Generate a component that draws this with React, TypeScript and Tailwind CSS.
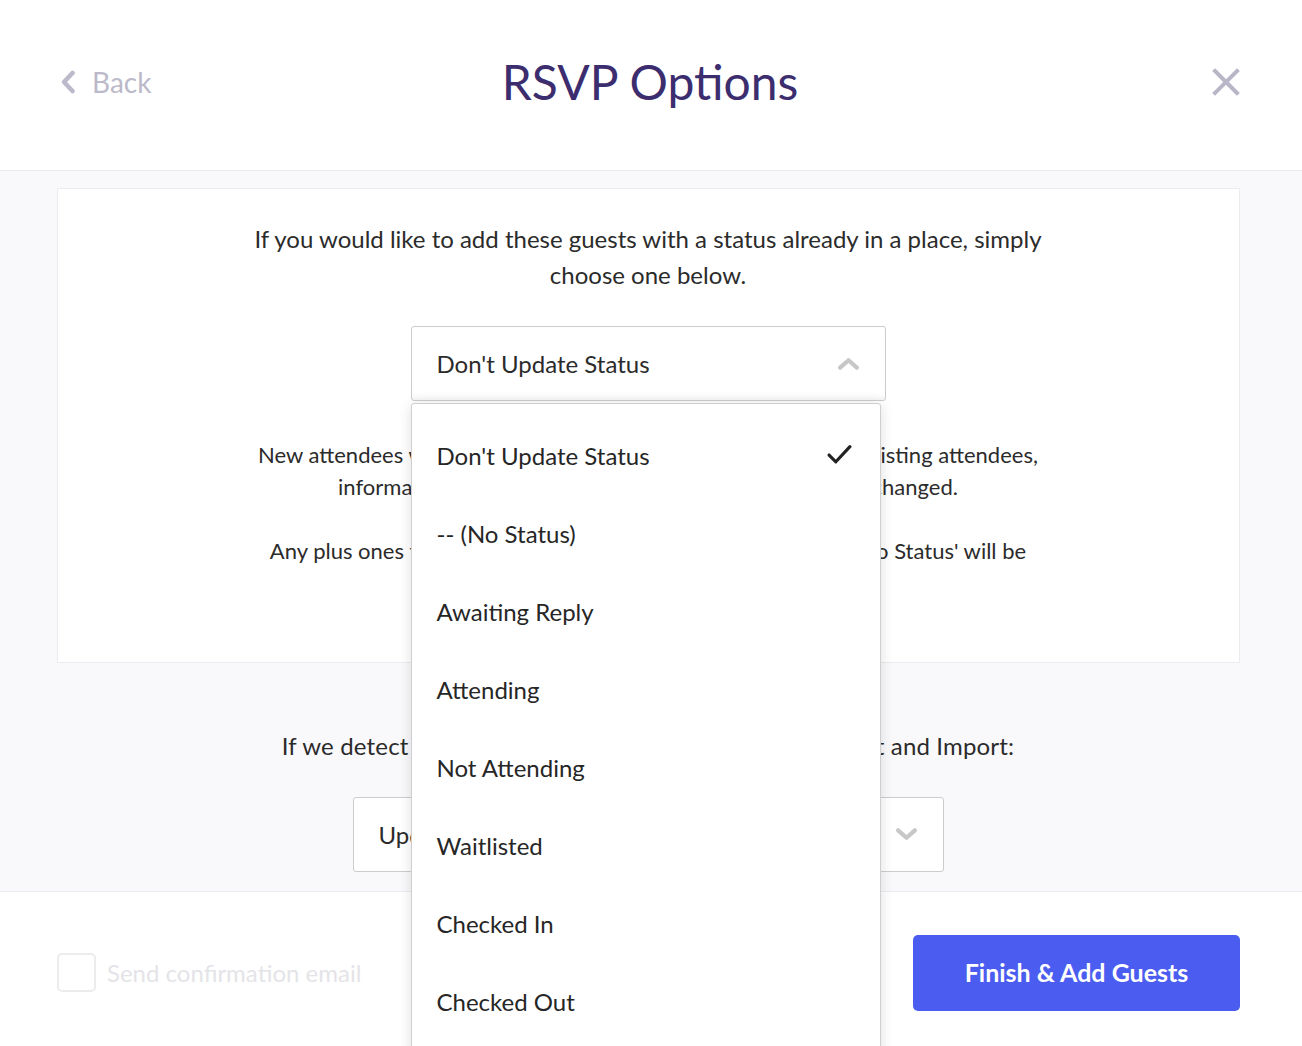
const font = { fontFamily: "Lato, 'Open Sans', sans-serif" };

const statuses = [
  "Don't Update Status",
  "-- (No Status)",
  "Awaiting Reply",
  "Attending",
  "Not Attending",
  "Waitlisted",
  "Checked In",
  "Checked Out",
  "Cancelled",
];

function Chevron({ up, className }: { up?: boolean; className?: string }) {
  return (
    <svg viewBox="0 0 24 14" className={className} fill="none">
      <path
        d={up ? "M3 11.5 12 3.5 21 11.5" : "M3 2.5 12 10.5 21 2.5"}
        stroke="currentColor"
        strokeWidth="4.5"
        strokeLinecap="round"
        strokeLinejoin="round"
      />
    </svg>
  );
}

function StatusMenu() {
  return (
    <div className="absolute left-0 top-[77px] z-20 w-[470px] rounded-t-[3px] border border-[#cfcfcf] bg-white pt-[13px] shadow-[0_2px_14px_rgba(0,0,0,0.13)]">
      {statuses.map((s, i) => (
        <div key={s} className="flex h-[78px] items-center justify-between pl-[25px] pr-[28px] text-[24px] text-[#262626]">
          <span>{s}</span>
          {i === 0 && (
            <svg viewBox="0 0 24 20" className="mb-[4px] h-[21px] w-[25px]" fill="none">
              <path d="M2 10.5 8.5 17 22 2.5" stroke="#222" strokeWidth="3" strokeLinecap="round" strokeLinejoin="round" />
            </svg>
          )}
        </div>
      ))}
    </div>
  );
}

export default function App() {
  return (
    <div className="flex h-[1046px] flex-col overflow-hidden bg-white" style={font}>
      <header className="flex h-[171px] shrink-0 items-center justify-between border-b border-[#ececf0] pb-[6px] pl-[60px] pr-[62px]">
        <button className="flex w-[160px] items-center gap-[16px] text-[28px] text-[#bcbaca]">
          <svg viewBox="0 0 16 24" className="h-[24px] w-[16px]" fill="none">
            <path d="M12.5 3 4 12l8.5 9" stroke="currentColor" strokeWidth="4.5" strokeLinecap="round" strokeLinejoin="round" />
          </svg>
          Back
        </button>
        <h1 className="text-[48px] font-normal leading-none text-[#3c2d6f]">RSVP Options</h1>
        <div className="flex w-[160px] justify-end">
          <svg viewBox="0 0 28 28" className="h-[28px] w-[28px]" fill="none">
            <path d="M3 3l22 22M25 3 3 25" stroke="#b9b7c7" strokeWidth="4" strokeLinecap="square" />
          </svg>
        </div>
      </header>

      <main className="flex flex-1 flex-col items-center bg-[#f9f9fb] pt-[17px]">
        <section className="ml-[-6px] flex w-[1183px] flex-col items-center border border-[#ececf0] bg-white pb-[63px] pt-[32px] text-center text-[#2b2b2b]">
          <p className="whitespace-nowrap text-[24px] leading-[36px]">
            If you would like to add these guests with a status already in a place, simply
            <br />
            choose one below.
          </p>
          <div className="relative mt-[33px]">
            <div className="flex h-[75px] w-[475px] items-center justify-between rounded-[3px] border border-[#cccccc] bg-white pl-[25px] pr-[24px] shadow-[inset_0_-6px_10px_-6px_rgba(0,0,0,0.08)]">
              <span className="text-[24px]">Don't Update Status</span>
              <Chevron up className="h-[13px] w-[25px] text-[#c7c7c7]" />
            </div>
            <StatusMenu />
          </div>
          <p className="mt-[38px] whitespace-nowrap text-[22px] leading-[32px]">
            New attendees will be added with the selected status. For any existing attendees,
            <br />
            information will be updated, but their status will not be changed.
          </p>
          <p className="mt-[32px] whitespace-nowrap text-[22px] leading-[32px]">
            Any plus ones that are imported along with the guests set to 'No Status' will be
            <br />
            imported with the same status.
          </p>
        </section>

        <p className="ml-[-6px] mt-[67px] whitespace-nowrap text-[24px] leading-[32px] tracking-[0.16px] text-[#2b2b2b]">
          If we detect a duplicate guest, choose to Update a Guest and Import:
        </p>
        <div className="ml-[-6px] mt-[35px] flex h-[75px] w-[591px] items-center justify-between rounded-[3px] border border-[#cccccc] bg-white pl-[25px] pr-[24px]">
          <span className="text-[24px] text-[#2b2b2b]">Update Existing Guest</span>
          <Chevron className="h-[13px] w-[25px] text-[#c7c7c7]" />
        </div>
      </main>

      <footer className="flex h-[155px] shrink-0 items-center justify-between border-t border-[#ececf0] bg-white pl-[57px] pr-[62px] pt-[7px]">
        <label className="flex items-center gap-[11px] text-[24px] text-[#e4e4e8]">
          <span className="h-[39px] w-[39px] rounded-[5px] border-2 border-[#ececef]" />
          Send confirmation email
        </label>
        <button className="h-[76px] w-[327px] rounded-[5px] bg-[#4b5cf0] text-[25px] font-bold text-white">
          Finish &amp; Add Guests
        </button>
      </footer>
    </div>
  );
}
